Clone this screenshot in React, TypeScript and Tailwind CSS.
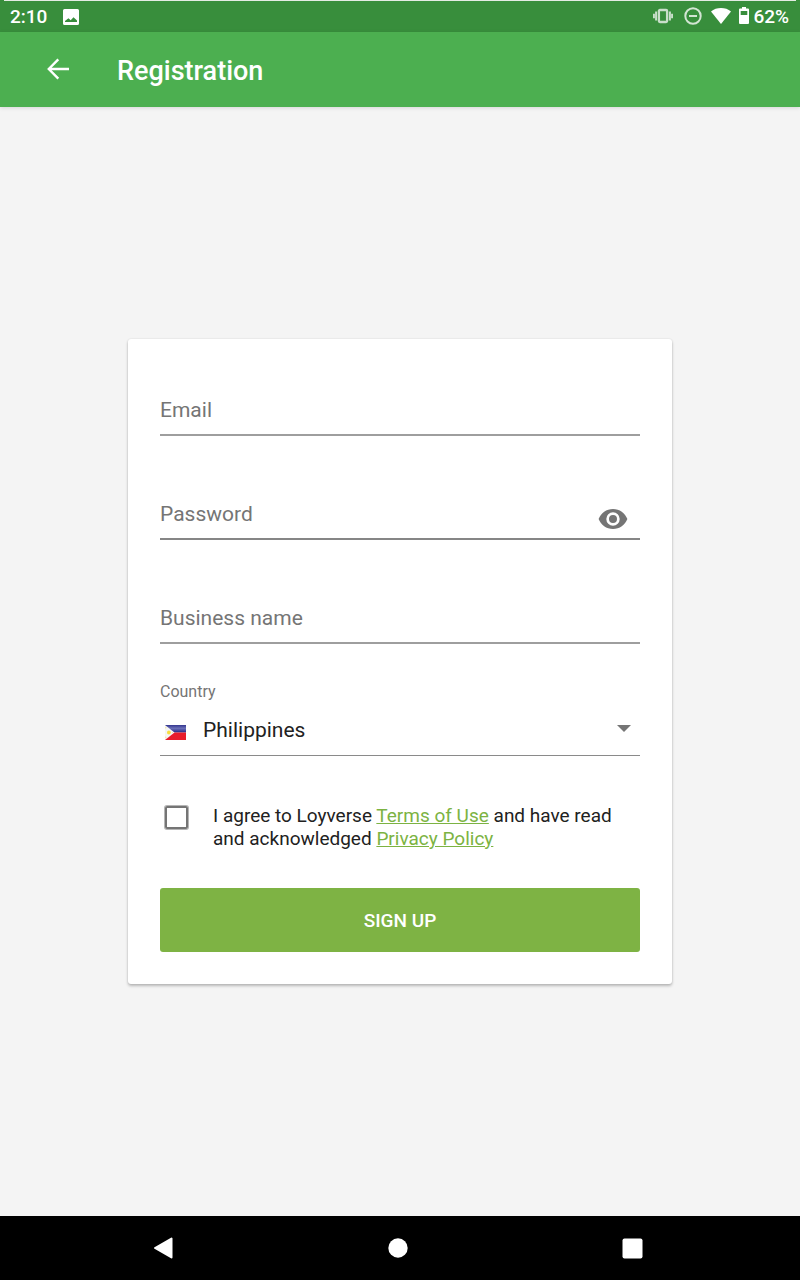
import { useState } from "react";

function StatusBar() {
  return (
    <div className="flex h-8 flex-col bg-[#388e3c] text-white">
      <div className="mx-1 h-px shrink-0 bg-[#e4ece4]" />
      <div className="flex flex-1 items-center justify-between pr-[11px] pl-[10px] text-[19px] leading-6 font-medium">
        <div className="flex items-center gap-4">
          <span>2:10</span>
          <svg width="16" height="16" viewBox="0 0 16 16" aria-hidden="true">
            <path
              fill="#fff"
              fillRule="evenodd"
              d="M1.500 0h13A1.500 1.500 0 0 1 16 1.500v13a1.500 1.500 0 0 1-1.500 1.500h-13A1.500 1.500 0 0 1 0 14.500v-13A1.500 1.500 0 0 1 1.500 0zM2 13h12v-1.500L10.500 8.200 7.700 11.300 5.400 9.200 2 12z"
            />
          </svg>
        </div>
        <div className="flex items-center">
          <div className="flex items-center pb-0.5">
            <svg width="20" height="16" viewBox="0 0 20 16" aria-hidden="true">
              <g fill="none" stroke="#c9dfca" strokeWidth="2">
                <rect x="5.900" y="2" width="8.200" height="12" rx="1" strokeWidth="2.300" />
                <path d="M3.100 3.500v9M.9 5.700v4.600M16.900 3.500v9M19.100 5.700v4.600" />
              </g>
            </svg>
            <svg className="ml-[11px]" width="18" height="18" viewBox="0 0 18 18" aria-hidden="true">
              <g fill="none" stroke="#d2e5d3" strokeWidth="2">
                <circle cx="9" cy="9" r="7.700" />
                <path d="M5 9h8" />
              </g>
            </svg>
            <svg className="ml-[9px]" width="20" height="16" viewBox="0 0 20 16" aria-hidden="true">
              <path fill="#fff" d="M10 16 0 3.400C2.800 1.200 6.200 0 10 0s7.200 1.200 10 3.400z" />
            </svg>
            <svg className="ml-2" width="10" height="18" viewBox="0 0 10 18" aria-hidden="true">
              <path
                fill="#fff"
                fillRule="evenodd"
                d="M3 0h4v1.500h2a1 1 0 0 1 1 1V16a1 1 0 0 1-1 1H1a1 1 0 0 1-1-1V2.500a1 1 0 0 1 1-1h2zM1.700 4v4h6.600V4z"
              />
            </svg>
          </div>
          <span className="ml-1">62%</span>
        </div>
      </div>
    </div>
  );
}

function AppBar() {
  return (
    <header className="z-10 flex h-[75px] items-center bg-[#4caf50] pl-[47px] text-white shadow-[0_1px_4px_rgba(0,0,0,0.12)]">
      <button type="button" aria-label="Back" className="pb-0.5">
        <svg width="22" height="22" viewBox="0 0 22 22" fill="none" stroke="#fff" strokeWidth="2.400">
          <path d="M22 11H2.500M11.300 1.400 1.800 11l9.500 9.600" />
        </svg>
      </button>
      <h1 className="ml-12 pt-0.5 text-[27px] leading-8 font-medium">Registration</h1>
    </header>
  );
}

const field =
  "block h-[62px] w-full min-w-0 flex-1 bg-transparent pt-[13px] text-[21px] text-[#212121] placeholder-[#757575] outline-none";

function Flag() {
  return (
    <svg width="21" height="15" viewBox="0 0 21 15" aria-hidden="true">
      <defs>
        <linearGradient id="blue" x1="0" y1="0" x2="0" y2="1">
          <stop offset="0" stopColor="#34368f" />
          <stop offset=".45" stopColor="#6b70b8" />
          <stop offset=".7" stopColor="#4a4da2" />
          <stop offset="1" stopColor="#23267f" />
        </linearGradient>
      </defs>
      <path fill="url(#blue)" d="M0 0h21v7.500H0z" />
      <path fill="#e81c2b" d="M0 7.500h21V15H0z" />
      <path fill="#f5f5f5" d="M0 0l9.500 7.500L0 15z" />
      <circle cx="3.900" cy="7.500" r="1.900" fill="#f8df3f" />
      <path fill="#f8df3f" d="M.5 2l1 .8-1 .8zM.5 11.500l1 .8-1 .8zM7 7l.8.500-.8.500z" />
    </svg>
  );
}

function RegistrationForm() {
  const [visible, setVisible] = useState(false);
  return (
    <form
      onSubmit={(e) => e.preventDefault()}
      className="w-[68%] rounded-[3px] bg-white px-8 pt-[33px] pb-8 shadow-[0_2px_3px_rgba(0,0,0,0.24),0_0_2px_rgba(0,0,0,0.12)]"
    >
      <div className="flex flex-col gap-10">
        <div className="flex border-b-2 border-[#9e9e9e]">
          <input type="email" aria-label="Email" placeholder="Email" className={field} />
        </div>
        <div className="flex border-b-2 border-[#868686]">
          <input
            type={visible ? "text" : "password"}
            aria-label="Password"
            placeholder="Password"
            className={field}
          />
          <button
            type="button"
            aria-label="Show password"
            onClick={() => setVisible(!visible)}
            className="mr-3 self-end pb-[9px]"
          >
            <svg width="30" height="20" viewBox="0 0 30 20">
              <path
                fill="#757575"
                fillRule="evenodd"
                d="M15 0C8.400 0 2.900 4.100.6 10c2.300 5.900 7.800 10 14.400 10s12.100-4.100 14.400-10C27.100 4.100 21.600 0 15 0zm0 16.700a6.700 6.700 0 1 1 0-13.400 6.700 6.700 0 0 1 0 13.400zM15 6a4 4 0 1 0 0 8 4 4 0 0 0 0-8z"
              />
            </svg>
          </button>
        </div>
        <div className="flex border-b-2 border-[#9e9e9e]">
          <input type="text" aria-label="Business name" placeholder="Business name" className={field} />
        </div>
      </div>

      <label htmlFor="country" className="mt-[38px] block text-[16px] leading-5 text-[#757575]">
        Country
      </label>
      <div className="flex h-[54px] items-center border-b border-[#8a8a8a] pl-[5px]">
        <div className="mt-2">
          <Flag />
        </div>
        <div className="grid flex-1 items-center">
          <select
            id="country"
            defaultValue="ph"
            className="col-start-1 row-start-1 h-[53px] appearance-none bg-transparent pt-1 pl-[17px] text-[21px] text-[#212121] outline-none"
          >
            <option value="ph">Philippines</option>
          </select>
          <svg
            className="pointer-events-none col-start-1 row-start-1 mr-[9px] justify-self-end"
            width="14"
            height="7"
            viewBox="0 0 14 7"
            aria-hidden="true"
          >
            <path fill="#757575" d="M0 0h14L7 7z" />
          </svg>
        </div>
      </div>

      <div className="mt-12 flex items-start pl-[5px]">
        <input
          id="agree"
          type="checkbox"
          className="mt-0.5 size-[23px] shrink-0 appearance-none rounded-[2px] border-2 border-[#757575] ring-1 ring-[#b5b5b5] checked:bg-[#7cb342]"
        />
        <label htmlFor="agree" className="ml-[25px] text-[19px] leading-[23px] text-[#212121]">
          I agree to Loyverse{" "}
          <a href="#terms" className="text-[#7cb342] underline">
            Terms of Use
          </a>{" "}
          and have read and acknowledged{" "}
          <a href="#privacy" className="text-[#7cb342] underline">
            Privacy Policy
          </a>
        </label>
      </div>

      <button
        type="submit"
        className="mt-[38px] block h-16 w-full rounded-[3px] bg-[#7eb344] pt-0.5 text-[19px] font-medium text-white"
      >
        SIGN UP
      </button>
    </form>
  );
}

function NavigationBar() {
  return (
    <nav className="flex h-16 items-center justify-between bg-black pr-[157px] pl-[154px]">
      <button type="button" aria-label="Back">
        <svg width="20" height="22" viewBox="0 0 20 22">
          <path fill="#fff" stroke="#fff" strokeWidth="2" strokeLinejoin="round" d="M1 11 17.500 1.500v19z" />
        </svg>
      </button>
      <button type="button" aria-label="Home">
        <svg width="20" height="20" viewBox="0 0 20 20">
          <circle cx="10" cy="10" r="9.700" fill="#fff" />
        </svg>
      </button>
      <button type="button" aria-label="Recent apps">
        <svg width="21" height="21" viewBox="0 0 21 21">
          <rect x=".5" y=".5" width="20" height="20" rx="2" fill="#fff" />
        </svg>
      </button>
    </nav>
  );
}

export default function App() {
  return (
    <div className="flex min-h-screen flex-col bg-[#f4f4f4] font-[Roboto,sans-serif]">
      <StatusBar />
      <AppBar />
      <main className="flex flex-1 items-center justify-center">
        <RegistrationForm />
      </main>
      <NavigationBar />
    </div>
  );
}
